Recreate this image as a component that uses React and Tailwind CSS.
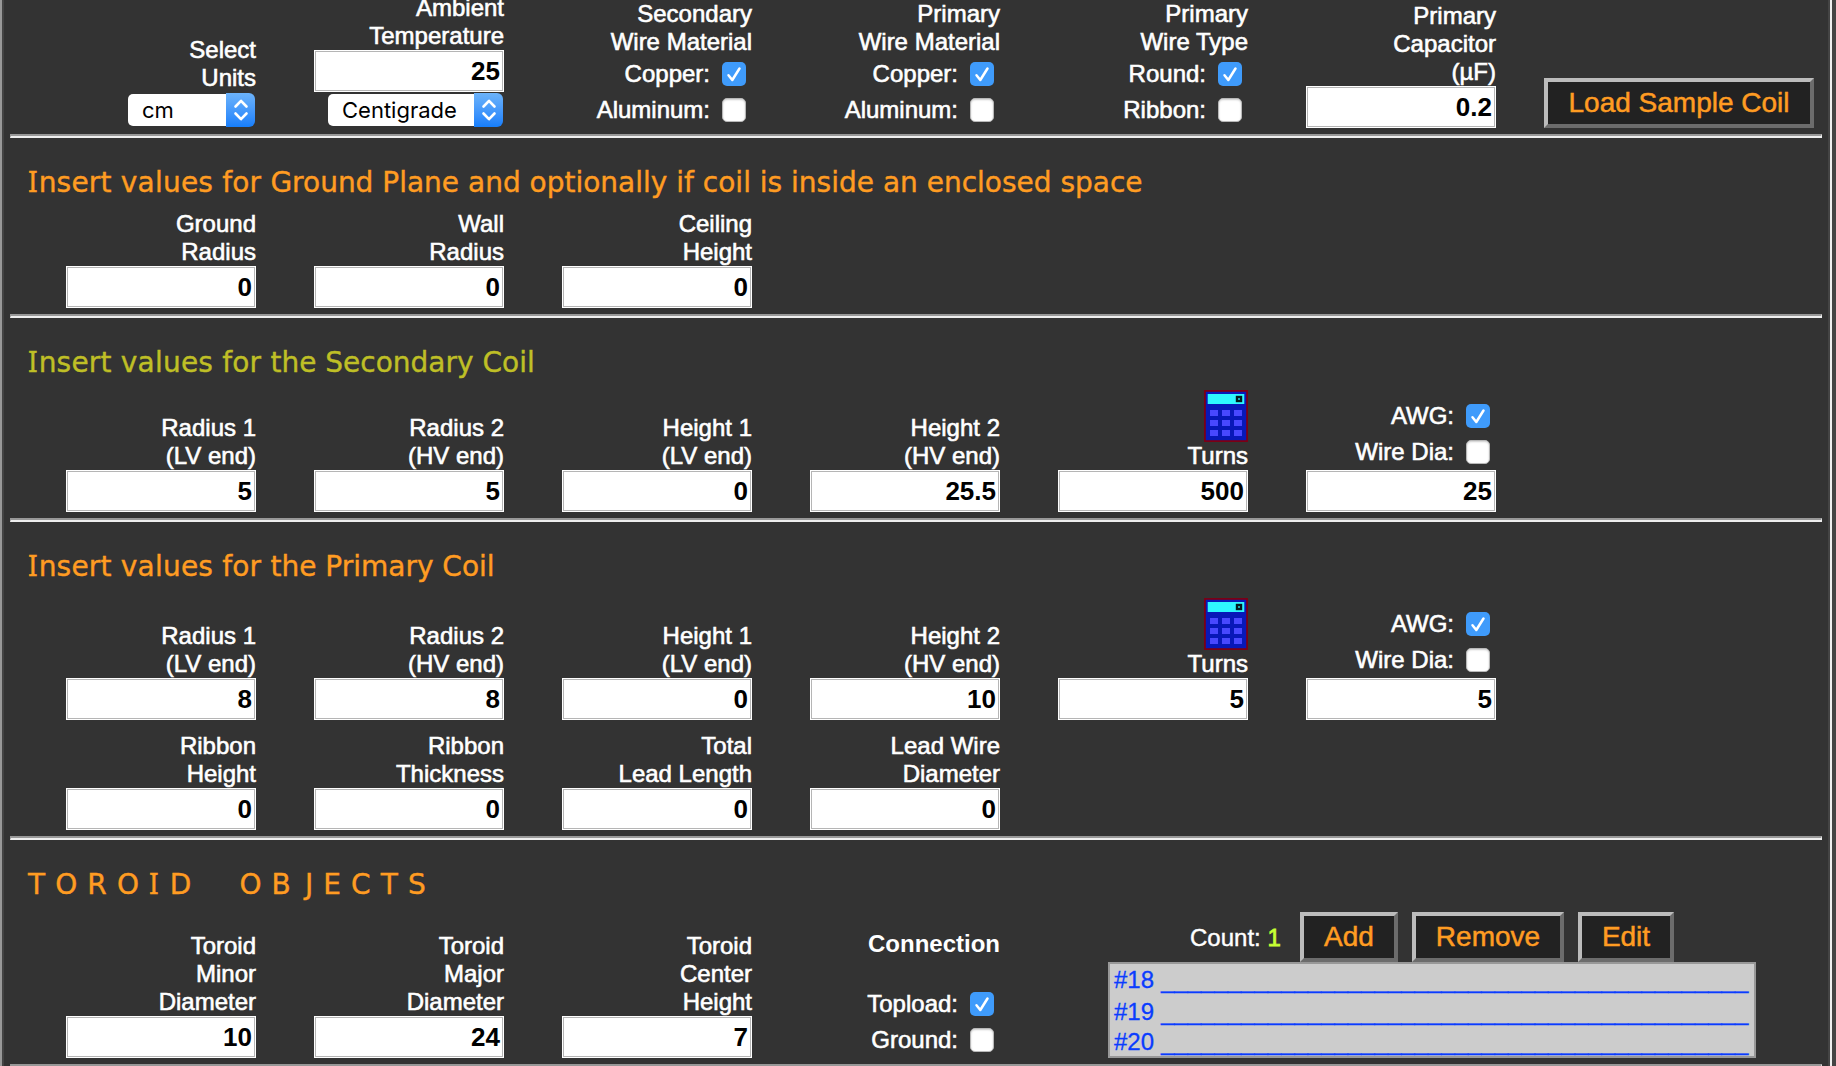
import React from 'react';

function Label({ lines }) {
  return (
    <div className="text-right text-[24px] leading-[28px] whitespace-nowrap text-white [-webkit-text-stroke:0.6px_white]">
      {lines.map((l) => (
        <div key={l}>{l}</div>
      ))}
    </div>
  );
}

function Box({ value }) {
  return (
    <div className="h-[42px] w-[190px] bg-white p-px">
      <div className="h-full border border-[#b5b5b5] pr-[2px] text-right text-[26px] leading-[38px] font-bold text-black">{value}</div>
    </div>
  );
}

function Field({ lines, value }) {
  return (
    <div className="flex w-[190px] flex-col items-stretch">
      <Label lines={lines} />
      <Box value={value} />
    </div>
  );
}

function Check({ label, on }) {
  return (
    <div className="flex h-[36px] items-center justify-end pr-[6px] text-[24px] leading-[28px] whitespace-nowrap text-white [-webkit-text-stroke:0.6px_white]">
      <span className="pr-[12px]">{label}</span>
      {on ? (
        <span className="flex size-[24px] items-center justify-center rounded-[5px] bg-[#3f9bfb]">
          <svg width="24" height="24" viewBox="0 0 24 24" fill="none" stroke="#fff" strokeWidth="2.5" strokeLinecap="round" strokeLinejoin="round">
            <path d="M6.5 13.2 L10.3 18 L17.5 6.5" />
          </svg>
        </span>
      ) : (
        <span className="size-[24px] rounded-[5px] border border-[#b8b8b8] bg-white shadow-[inset_0_1px_2px_#ccc]" />
      )}
    </div>
  );
}

function Select({ value, width }) {
  return (
    <div className={'flex h-[34px] items-center ' + width}>
      <div className="h-[32px] flex-1 rounded-l-[5px] bg-white pl-[14px] font-['Inter'] text-[22px] leading-[32px] text-black">{value}</div>
      <div className="flex h-[34px] w-[29px] items-center justify-center rounded-r-[6px] bg-linear-to-b from-[#6cb3fa] to-[#157efb]">
        <svg width="16" height="24" viewBox="0 0 16 24" fill="none" stroke="#fff" strokeWidth="2.6" strokeLinecap="round" strokeLinejoin="round">
          <path d="M2.5 8.5 L8 2.8 L13.5 8.5 M2.5 15.5 L8 21.2 L13.5 15.5" />
        </svg>
      </div>
    </div>
  );
}

function Calculator() {
  return (
    <svg width="44" height="52" viewBox="0 0 44 52">
      <rect width="44" height="52" fill="#7a0014" />
      <rect x="1.8" y="1.8" width="40.4" height="48.4" fill="#0818b8" />
      <rect x="3.7" y="4" width="36.6" height="10" fill="#2ff6ff" />
      <rect x="33" y="7" width="4" height="4" fill="#2ff6ff" stroke="#021a20" strokeWidth="2.4" />
      {[20, 30, 40].map((y) =>
        [6, 18, 30].map((x) => <rect key={x + '-' + y} x={x} y={y} width="8" height="6" fill="#4848ff" />)
      )}
    </svg>
  );
}

function Button({ children, width }) {
  return (
    <div className={'h-[50px] border-4 border-t-[#bcbcbc] border-r-[#6c6c6c] border-b-[#6c6c6c] border-l-[#bcbcbc] bg-[#222] text-center text-[28px] leading-[41px] whitespace-nowrap text-[#ff9c22] [-webkit-text-stroke:0.5px_#ff9c22] ' + width}>
      {children}
    </div>
  );
}

function Rule() {
  return <div className="mx-[6px] h-[4px] shrink-0 border-t-2 border-r border-b-2 border-l border-t-[#989898] border-r-[#eee] border-b-[#eee] border-l-[#989898]" />;
}

function SerifI() {
  return <span className="pr-px font-['Noto_Sans'] text-[28.5px] leading-none">I</span>;
}

function Heading({ children, color }) {
  return (
    <div className={"pl-[24px] font-['DejaVu_Sans'] text-[28px] leading-[34px] whitespace-pre [-webkit-text-stroke:0.4px_currentColor] " + color}>{children}</div>
  );
}

function InsertHeading({ rest, color }) {
  return (
    <Heading color={color}>
      <SerifI />
      <span className="tracking-[0.2px]">nsert values for </span>
      {rest}
    </Heading>
  );
}

function TurnsField({ value }) {
  return (
    <div className="flex w-[190px] flex-col items-end">
      <Calculator />
      <Field lines={['Turns']} value={value} />
    </div>
  );
}

function WireField({ value }) {
  return (
    <div className="w-[190px]">
      <Check label="AWG:" on />
      <Check label="Wire Dia:" />
      <Box value={value} />
    </div>
  );
}

const row = 'flex items-end gap-[58px] pl-[62px]';

const coils = [
  { n: '#18', h: 'h-[32px]' },
  { n: '#19', h: 'h-[30px]' },
  { n: '#20', h: 'h-[31px]' },
];

export default function App() {
  return (
    <div className="h-[1066px] w-[1836px] overflow-hidden bg-[#444] font-['Liberation_Sans',sans-serif]">
      <div className="flex h-[1068px] w-[1832px] flex-col border-r-2 border-l-2 border-r-[#eee] border-l-[#999]">
        <div className="flex h-full flex-col border-x-2 border-[#444] bg-[#333]">
          <div className="flex h-[134px] shrink-0 flex-col justify-end">
            <div className={row}>
              <div className="flex w-[190px] flex-col items-end pb-[7px]">
                <Label lines={['Select', 'Units']} />
                <div className="pt-px pr-px"><Select value="cm" width="w-[127px]" /></div>
              </div>
              <div className="flex w-[190px] flex-col items-end pb-[7px]">
                <Field lines={['Ambient', 'Temperature']} value="25" />
                <div className="pt-[1px] pr-px"><Select value="Centigrade" width="w-[175px]" /></div>
              </div>
              <div className="w-[190px] pb-[6px]">
                <Label lines={['Secondary', 'Wire Material']} />
                <Check label="Copper:" on />
                <Check label="Aluminum:" />
              </div>
              <div className="w-[190px] pb-[6px]">
                <Label lines={['Primary', 'Wire Material']} />
                <Check label="Copper:" on />
                <Check label="Aluminum:" />
              </div>
              <div className="w-[190px] pb-[6px]">
                <Label lines={['Primary', 'Wire Type']} />
                <Check label="Round:" on />
                <Check label="Ribbon:" />
              </div>
              <div className="pb-[6px]"><Field lines={['Primary', 'Capacitor', '(µF)']} value="0.2" /></div>
              <div className="-ml-[10px] pb-[6px]"><Button width="w-[270px]">Load Sample Coil</Button></div>
            </div>
          </div>
          <Rule />

          <div className="flex h-[176px] shrink-0 flex-col justify-between pt-[28px] pb-[6px]">
            <InsertHeading color="text-[#ff9c22]" rest="Ground Plane and optionally if coil is inside an enclosed space" />
            <div className={row}>
              <Field lines={['Ground', 'Radius']} value="0" />
              <Field lines={['Wall', 'Radius']} value="0" />
              <Field lines={['Ceiling', 'Height']} value="0" />
            </div>
          </div>
          <Rule />

          <div className="flex h-[200px] shrink-0 flex-col justify-between pt-[28px] pb-[6px]">
            <InsertHeading color="text-[#bfbf26]" rest="the Secondary Coil" />
            <div className={row}>
              <Field lines={['Radius 1', '(LV end)']} value="5" />
              <Field lines={['Radius 2', '(HV end)']} value="5" />
              <Field lines={['Height 1', '(LV end)']} value="0" />
              <Field lines={['Height 2', '(HV end)']} value="25.5" />
              <TurnsField value="500" />
              <WireField value="25" />
            </div>
          </div>
          <Rule />

          <div className="flex h-[314px] shrink-0 flex-col pt-[28px] pb-[6px]">
            <InsertHeading color="text-[#ff9c22]" rest="the Primary Coil" />
            <div className={row + ' mt-auto'}>
              <Field lines={['Radius 1', '(LV end)']} value="8" />
              <Field lines={['Radius 2', '(HV end)']} value="8" />
              <Field lines={['Height 1', '(LV end)']} value="0" />
              <Field lines={['Height 2', '(HV end)']} value="10" />
              <TurnsField value="5" />
              <WireField value="5" />
            </div>
            <div className={row + ' pt-[12px]'}>
              <Field lines={['Ribbon', 'Height']} value="0" />
              <Field lines={['Ribbon', 'Thickness']} value="0" />
              <Field lines={['Total', 'Lead Length']} value="0" />
              <Field lines={['Lead Wire', 'Diameter']} value="0" />
            </div>
          </div>
          <Rule />

          <div className="flex h-[224px] shrink-0 flex-col justify-between pt-[28px] pb-[6px]">
            <Heading color="text-[#ff9c22]">
              <span className="tracking-[10.1px]">TORO<SerifI />D  OB<span className="pl-[4px]">J</span>ECTS</span>
            </Heading>
            <div className={row}>
              <Field lines={['Toroid', 'Minor', 'Diameter']} value="10" />
              <Field lines={['Toroid', 'Major', 'Diameter']} value="24" />
              <Field lines={['Toroid', 'Center', 'Height']} value="7" />
              <div className="w-[190px]">
                <div className="pb-[28px] text-right text-[24px] leading-[28px] font-bold text-white">Connection</div>
                <Check label="Topload:" on />
                <Check label="Ground:" />
              </div>
              <div className="ml-[50px]">
                <div className="flex pl-[82px]">
                  <div className="w-[110px] pt-[12px] text-[24px] leading-[28px] whitespace-nowrap text-white [-webkit-text-stroke:0.4px_white]">
                    Count: <span className="text-[#c6ff33] [-webkit-text-stroke:0.8px_#c6ff33]">1</span>
                  </div>
                  <Button width="w-[98px]">Add</Button>
                  <div className="w-[14px]" />
                  <Button width="w-[152px]">Remove</Button>
                  <div className="w-[14px]" />
                  <Button width="w-[96px]">Edit</Button>
                </div>
                <div className="h-[96px] w-[648px] overflow-hidden border-2 border-[#989898] bg-[#ccc] pl-[4px] text-[24px] text-[#0a3cff]">
                  {coils.map((c) => (
                    <div key={c.n} className={'flex items-start leading-[31px] [-webkit-text-stroke:0.3px_#0a3cff] ' + c.h}>
                      <span className="w-[47px]">{c.n}</span>
                      <span>____________________________________________</span>
                    </div>
                  ))}
                </div>
              </div>
            </div>
          </div>
          <Rule />
        </div>
      </div>
    </div>
  );
}
